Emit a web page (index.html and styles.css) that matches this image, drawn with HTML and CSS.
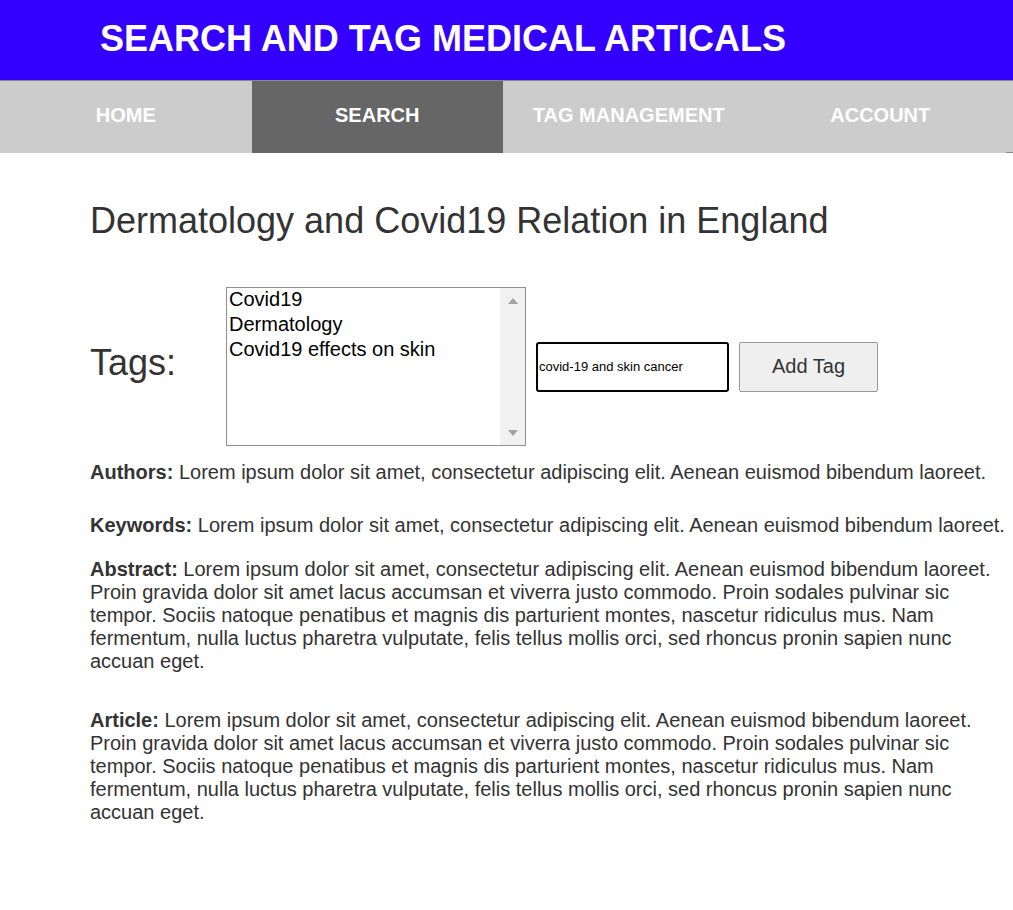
FILE: index.html
```html
<!DOCTYPE html>
<html lang="en">
<head>
<meta charset="utf-8">
<title>Search and Tag Medical Articals</title>
<link rel="stylesheet" href="styles.css">
</head>
<body>
<header class="site-header">
  <h1 class="site-title">SEARCH AND TAG MEDICAL ARTICALS</h1>
</header>
<nav class="main-nav">
  <a class="nav-item" href="#">HOME</a>
  <a class="nav-item active" href="#">SEARCH</a>
  <a class="nav-item" href="#">TAG MANAGEMENT</a>
  <a class="nav-item" href="#">ACCOUNT</a>
</nav>
<main class="content">
  <h2 class="article-title">Dermatology and Covid19 Relation in England</h2>
  <div class="tags-row">
    <span class="tags-label">Tags:</span>
    <div class="tag-box">
      <select class="tag-list" multiple>
        <option>Covid19</option>
        <option>Dermatology</option>
        <option>Covid19 effects on skin</option>
      </select>
      <div class="scrollbar" aria-hidden="true">
        <span class="scroll-btn"><span class="arrow arrow-up"></span></span>
        <span class="scroll-btn"><span class="arrow arrow-down"></span></span>
      </div>
    </div>
    <input class="tag-input" type="text" value="covid-19 and skin cancer">
    <button class="add-btn" type="button">Add Tag</button>
  </div>
  <p class="meta authors"><b>Authors:</b> Lorem ipsum dolor sit amet, consectetur adipiscing elit. Aenean euismod bibendum laoreet.</p>
  <p class="meta keywords"><b>Keywords:</b> Lorem ipsum dolor sit amet, consectetur adipiscing elit. Aenean euismod bibendum laoreet.</p>
  <p class="meta abstract"><b>Abstract:</b> Lorem ipsum dolor sit amet, consectetur adipiscing elit. Aenean euismod bibendum laoreet. Proin gravida dolor sit amet lacus accumsan et viverra justo commodo. Proin sodales pulvinar sic tempor. Sociis natoque penatibus et magnis dis parturient montes, nascetur ridiculus mus. Nam fermentum, nulla luctus pharetra vulputate, felis tellus mollis orci, sed rhoncus pronin sapien nunc accuan eget.</p>
  <p class="meta article"><b>Article:</b> Lorem ipsum dolor sit amet, consectetur adipiscing elit. Aenean euismod bibendum laoreet. Proin gravida dolor sit amet lacus accumsan et viverra justo commodo. Proin sodales pulvinar sic tempor. Sociis natoque penatibus et magnis dis parturient montes, nascetur ridiculus mus. Nam fermentum, nulla luctus pharetra vulputate, felis tellus mollis orci, sed rhoncus pronin sapien nunc accuan eget.</p>
</main>
</body>
</html>
```
FILE: styles.css
```css
* { box-sizing: border-box; }

body {
  margin: 0;
  font-family: "Liberation Sans", Arial, sans-serif;
  color: #333;
  background: #fff;
}

.site-header {
  height: 80px;
  background: #3300ff;
  padding: 18px 0 0 100px;
}

.site-title {
  margin: 0;
  font-size: 36px;
  font-weight: bold;
  line-height: normal;
  color: #fff;
}

.main-nav {
  display: flex;
  align-items: flex-start;
  height: 73px;
  background: #ccc;
  border-top: 1px solid #888;
  border-bottom: 1px solid #888;
  padding-right: 7px;
}

.nav-item {
  flex: 1;
  height: 72px;
  padding-bottom: 3px;
  display: flex;
  align-items: center;
  justify-content: center;
  background: #ccc;
  color: #fff;
  font-size: 20px;
  font-weight: bold;
  text-decoration: none;
}

.nav-item.active {
  background: #666;
}

.content {
  padding-left: 90px;
}

.article-title {
  margin: 47px 0 0;
  font-size: 36px;
  font-weight: normal;
  line-height: normal;
  color: #333;
}

.tags-row {
  display: flex;
  align-items: center;
  margin-top: 45px;
}

.tags-label {
  width: 136px;
  font-size: 36px;
  line-height: normal;
  color: #333;
  margin-bottom: 8px;
}

.tag-box {
  display: flex;
  width: 300px;
  height: 159px;
  border: 1px solid #8f8f8f;
  background: #fff;
}

.tag-list {
  flex: 1;
  min-width: 0;
  height: 100%;
  border: none;
  border-radius: 0;
  padding: 0;
  margin: 0;
  font-family: "Liberation Sans", Arial, sans-serif;
  font-size: 20px;
  color: #000;
  background: #fff;
  overflow: hidden;
  outline: none;
}

.tag-list option {
  padding: 0 2px 2px;
}

.scrollbar {
  width: 25px;
  display: flex;
  flex-direction: column;
  justify-content: space-between;
  background: #f1f1f1;
}

.scroll-btn {
  display: flex;
  align-items: center;
  justify-content: center;
  height: 25px;
}

.arrow {
  width: 0;
  height: 0;
  border-left: 5.5px solid transparent;
  border-right: 5.5px solid transparent;
}

.arrow-up {
  border-bottom: 6px solid #a3a3a3;
}

.arrow-down {
  border-top: 6px solid #a3a3a3;
}

.tag-input {
  width: 193px;
  height: 50px;
  margin: 0 0 0 10px;
  padding: 0 1px;
  border: 2px solid #000;
  border-radius: 3px;
  font-family: "Liberation Sans", Arial, sans-serif;
  font-size: 13px;
  color: #000;
  background: #fff;
  outline: none;
}

.add-btn {
  width: 139px;
  height: 50px;
  margin: 0 0 0 10px;
  padding: 0;
  border: 1px solid #999;
  border-radius: 2px;
  background: #efefef;
  font-family: "Liberation Sans", Arial, sans-serif;
  font-size: 20px;
  color: #333;
}

.meta {
  margin: 0;
  font-size: 20px;
  line-height: 23px;
  color: #333;
}

.authors { margin-top: 15px; }
.keywords { margin-top: 30px; }
.abstract { margin-top: 21px; }
.article { margin-top: 36px; }
```
